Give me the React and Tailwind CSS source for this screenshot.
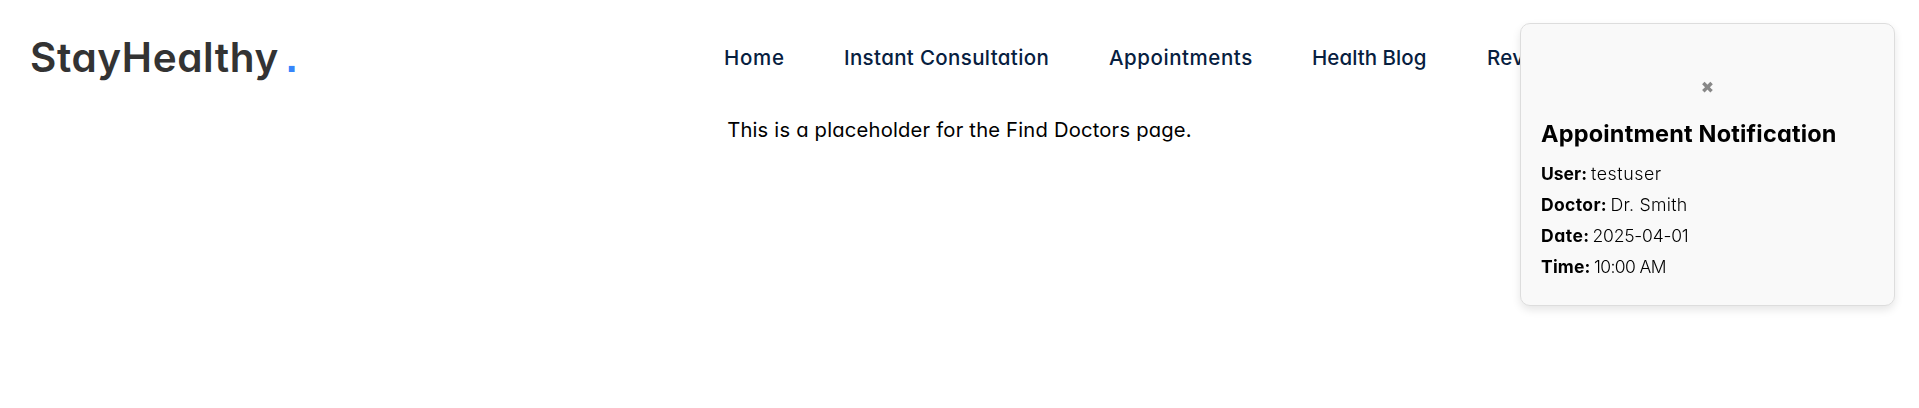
const links = [
  { label: "Home", style: "w-[120px] tracking-[0.7px]" },
  { label: "Instant Consultation", style: "w-[265px] tracking-[0.35px]" },
  { label: "Appointments", style: "w-[203px] tracking-[0.55px]" },
  { label: "Health Blog", style: "w-[175px] tracking-[0.05px]" },
  { label: "Reviews", style: "w-[140px] tracking-[0.3px]" },
];

const details = [
  { label: "User:", value: "testuser", labelStyle: "w-[50px] tracking-[0px]", valueStyle: "text-[17.8px] tracking-[0.55px]" },
  { label: "Doctor:", value: "Dr. Smith", labelStyle: "w-[69.5px] tracking-[0.35px]", valueStyle: "text-[17.8px] tracking-[0.25px]" },
  { label: "Date:", value: "2025-04-01", labelStyle: "w-[51.5px] tracking-[0.5px]", valueStyle: "tracking-[-0.2px]" },
  { label: "Time:", value: "10:00 AM", labelStyle: "w-[53px] tracking-[0.2px]", valueStyle: "tracking-[-0.6px]" },
];

function Header() {
  return (
    <header className="flex h-[116px] items-center pl-[30px]">
      <div className="flex w-[694px] items-baseline gap-[7px] text-[40.5px] leading-[48px] font-semibold text-[#333333]">
        <span className="tracking-[0.6px]">StayHealthy</span>
        <span className="font-['Liberation_Sans'] font-bold text-[#3685fb]">.</span>
      </div>
      <nav className="flex pb-px text-[20.5px] leading-[30px] font-medium text-[#07203f]">
        {links.map((link) => (
          <a key={link.label} href="#" className={`shrink-0 whitespace-nowrap ${link.style}`}>
            {link.label}
          </a>
        ))}
      </nav>
    </header>
  );
}

function Notification() {
  return (
    <aside className="fixed top-[23px] left-[1520px] h-[283px] w-[375px] rounded-[10px] border border-[#dddddd] bg-[#f9f9f9] px-5 text-black shadow-[0_4px_8px_rgba(0,0,0,0.1)]">
      <button className="mt-[50px] block h-[26px] w-full text-center font-['DejaVu_Sans'] text-[16px] leading-[25px] text-[#888888]">
        ✖
      </button>
      <h3 className="mt-[16px] text-[23.5px] leading-[36px] font-bold tracking-[0.18px] whitespace-nowrap">
        Appointment Notification
      </h3>
      <div className="mt-[6px] text-[17.5px] leading-[31px]">
        {details.map((row) => (
          <p key={row.label} className="flex h-[31px]">
            <strong className={`shrink-0 font-bold ${row.labelStyle}`}>{row.label}</strong>
            <span className={`leading-[31px] font-light ${row.valueStyle}`}>{row.value}</span>
          </p>
        ))}
      </div>
    </aside>
  );
}

export default function App() {
  return (
    <div className="h-screen overflow-hidden bg-white font-[Inter,sans-serif] [font-feature-settings:'cv11']">
      <Header />
      <p className="text-center text-[20.2px] leading-[28px] tracking-[0.2px] text-black">
        This is a placeholder for the Find Doctors page.
      </p>
      <Notification />
    </div>
  );
}
